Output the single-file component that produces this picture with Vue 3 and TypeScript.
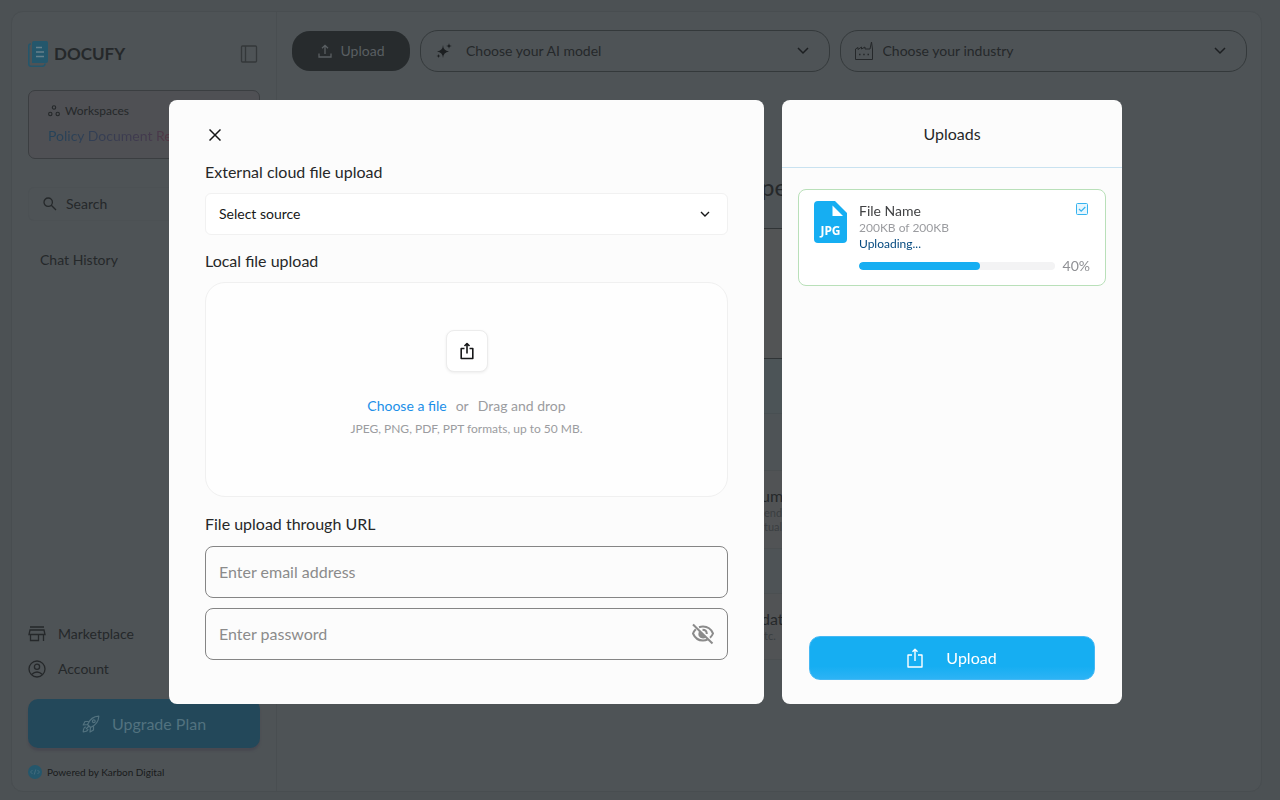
<script setup lang="ts">
import { ref } from 'vue'

interface Suggestion {
  title: string
  lines: string[]
}

const source = ref('')
const model = ref('')
const industry = ref('')
const email = ref('')
const password = ref('')
const showPassword = ref(false)
const progress = ref(62)

const suggestions: Suggestion[] = [
  { title: 'um', lines: ['end', 'tual'] },
  { title: 'dat', lines: ['tc.'] },
]
</script>

<template>
  <div class="screen">
    <div class="frame">
      <aside class="sidebar">
        <div class="brand">
          <svg class="brand-mark" viewBox="0 0 20 26" width="20" height="26" aria-hidden="true">
            <path d="M3 3H2.500Q.8 3 .8 5V23Q.8 25.200 3 25.200H14.500Q17 25.200 17 22.500" fill="none" stroke="#24576c" stroke-width="1.500" />
            <path d="M6 0H18.500Q20 0 20 1.500V20Q20 22 18 22H4V2Q4 0 6 0Z" fill="#24576c" />
            <path d="M8 6.500H14M8 11H16M8 15.500H16" stroke="#66808b" stroke-width="1.600" />
          </svg>
          <span class="brand-name">DOCUFY</span>
          <button class="bare toggle" type="button" aria-label="Toggle sidebar">
            <svg viewBox="0 0 18 18" width="18" height="18" fill="none" stroke="#34383a" stroke-width="1.300">
              <rect x="1.500" y="1" width="15" height="16" rx="1" /><path d="M5.500 1V17" />
            </svg>
          </button>
        </div>

        <section class="workspace">
          <div class="workspace-label">
            <svg viewBox="0 0 12 12" width="12" height="12" fill="none" stroke="#25282a" stroke-width="1.100" aria-hidden="true">
              <circle cx="6" cy="2.500" r="1.700" /><circle cx="2.300" cy="9" r="1.700" /><circle cx="9.700" cy="9" r="1.700" />
            </svg>
            <span>Workspaces</span>
          </div>
          <div class="workspace-name">Policy Document Review</div>
        </section>

        <button class="bare search" type="button">
          <svg viewBox="0 0 14 14" width="14" height="14" fill="none" stroke="#25282a" stroke-width="1.300" aria-hidden="true">
            <circle cx="5.200" cy="5.200" r="4.200" /><path d="M8.300 8.300L13 13" />
          </svg>
          <span>Search</span>
        </button>
        <h2 class="history">Chat History</h2>

        <nav class="links">
          <a href="#marketplace">
            <svg viewBox="0 0 18 18" width="18" height="18" fill="none" stroke="#25282a" stroke-width="1.300" aria-hidden="true">
              <path d="M2 2H16M2 5H16L17 9.500H1ZM2.500 9.500V15.500H10.500V9.500M15.500 9.500V16" />
            </svg>
            <span>Marketplace</span>
          </a>
          <a href="#account">
            <svg viewBox="0 0 18 18" width="18" height="18" fill="none" stroke="#25282a" stroke-width="1.300" aria-hidden="true">
              <circle cx="9" cy="9" r="8" /><circle cx="9" cy="6.800" r="2.600" /><path d="M3.600 14.500Q9 9.500 14.400 14.500" />
            </svg>
            <span>Account</span>
          </a>
        </nav>
        <button class="upgrade" type="button">
          <svg viewBox="0 0 18 18" width="18" height="18" fill="none" stroke="#52727f" stroke-width="1.200" stroke-linejoin="round" aria-hidden="true">
            <path d="M5.500 9.500Q9 1.500 16.800 1.200Q16.500 9 8.500 12.500ZM6.500 6.500L3 6.500L1.200 10L5.500 9.500M11.500 11.500V15L8 17L8.500 12.500" />
            <circle cx="11.800" cy="6.200" r="1.400" />
            <path d="M4 12Q1.500 12 1.200 16.800Q6 16.500 6 14M7 11L4 14" />
          </svg>
          <span>Upgrade Plan</span>
        </button>
        <div class="powered">
          <svg viewBox="0 0 14 14" width="14" height="14" aria-hidden="true">
            <circle cx="7" cy="7" r="7" fill="#24576c" />
            <path d="M4.500 5L2.500 7L4.500 9M9.500 5L11.500 7L9.500 9M7.700 4.500L6.300 9.500" fill="none" stroke="#4a7182" stroke-width=".8" />
          </svg>
          <span>Powered by Karbon Digital</span>
        </div>
      </aside>

      <main class="main">
        <div class="toolbar">
          <button class="pill-button" type="button">
            <svg viewBox="0 0 14 14" width="14" height="14" fill="none" stroke="#5a5f62" stroke-width="1.300" aria-hidden="true">
              <path d="M7 10V1.500M4 4.300L7 1.300L10 4.300M1 9.500V13H13V9.500" />
            </svg>
            <span>Upload</span>
          </button>
          <label class="pill">
            <svg viewBox="0 0 16 16" width="16" height="16" fill="#1c1f21" aria-hidden="true">
              <path d="M7 2Q7.300 7.700 13 8.500Q7.300 9.300 7 15Q6.700 9.300 1 8.500Q6.700 7.700 7 2ZM13 0Q13.200 2.800 16 3Q13.200 3.200 13 6Q12.800 3.200 10 3Q12.800 2.800 13 0ZM2.500 11Q2.600 12.900 4.500 13Q2.600 13.100 2.500 15Q2.400 13.100 .5 13Q2.400 12.900 2.500 11Z" />
            </svg>
            <select v-model="model" aria-label="AI model">
              <option value="">Choose your AI model</option>
            </select>
            <svg viewBox="0 0 12 8" width="12" height="8" fill="none" stroke="#1c1f21" stroke-width="1.500" aria-hidden="true"><path d="M1 1L6 6L11 1" /></svg>
          </label>
          <label class="pill industry">
            <svg viewBox="0 0 20 18" width="20" height="18" fill="none" stroke="#25282a" aria-hidden="true">
              <path d="M1.500 17.500V7L4 5.500V7.500L7.500 5V7L11 5V7H16L17.500 0L18.500 7V17.500Z" stroke-width="1" />
              <path d="M5 12.500H6.500M9.200 12.500H10.700M13.500 12.500H15" stroke-width="1.500" />
            </svg>
            <select v-model="industry" aria-label="Industry">
              <option value="">Choose your industry</option>
            </select>
            <svg viewBox="0 0 12 8" width="12" height="8" fill="none" stroke="#1c1f21" stroke-width="1.500" aria-hidden="true"><path d="M1 1L6 6L11 1" /></svg>
          </label>
        </div>
        <div class="stage">
          <h1>pe</h1>
          <div class="prompt"></div>
          <div class="divider"></div>
          <article v-for="item in suggestions" :key="item.title" class="suggestion">
            <h3>{{ item.title }}</h3>
            <p v-for="line in item.lines" :key="line">{{ line }}</p>
          </article>
        </div>
      </main>
    </div>

    <div class="overlay">
      <section class="dialog" role="dialog" aria-label="File upload">
        <button class="bare close" type="button" aria-label="Close">
          <svg viewBox="0 0 12 12" width="12" height="12" fill="none" stroke="#161718" stroke-width="1.500"><path d="M.5 .5L11.500 11.500M11.500 .5L.5 11.500" /></svg>
        </button>
        <label class="title" for="source">External cloud file upload</label>
        <div class="source">
          <select id="source" v-model="source">
            <option value="">Select source</option>
          </select>
          <svg viewBox="0 0 10 6" width="10" height="6" fill="none" stroke="#161718" stroke-width="1.400" aria-hidden="true"><path d="M1 1L5 5L9 1" /></svg>
        </div>

        <h2 class="title local">Local file upload</h2>
        <div class="dropzone">
          <button class="share" type="button" aria-label="Add a file">
            <svg viewBox="0 0 14 18" width="14" height="18" fill="none" stroke="#161718" stroke-width="1.600" stroke-linejoin="round">
              <path d="M7 11.500V2M4.500 4L7 1.500L9.500 4M4.500 6.500H1.200V16.500H12.800V6.500H9.500" />
            </svg>
          </button>
          <p class="choose"><a href="#choose">Choose a file</a><span>or</span><span>Drag and drop</span></p>
          <p class="formats">JPEG, PNG, PDF, PPT formats, up to 50 MB.</p>
        </div>

        <h2 class="title url">File upload through URL</h2>
        <div class="field">
          <input v-model="email" type="email" placeholder="Enter email address" aria-label="Email address" />
        </div>
        <div class="field">
          <input v-model="password" :type="showPassword ? 'text' : 'password'" placeholder="Enter password" aria-label="Password" />
          <button class="bare eye" type="button" aria-label="Show password" @click="showPassword = !showPassword">
            <svg viewBox="0 0 24 24" width="24" height="24" fill="none" stroke="#8b8b8b" stroke-width="2">
              <path d="M8 5.200Q10 4.500 12 4.500Q19 4.500 22 11.500Q21 14 19 15.800M4.800 7.200Q3 9 2 11.500Q5 18.500 12 18.500Q14.500 18.500 16.500 17.500" />
              <path d="M8 9Q5.500 15.800 12 16.500Q13.800 16.500 15 15.300Z" fill="#8b8b8b" stroke="none" />
              <path d="M11.500 7.800Q15.800 7.800 15.800 12" />
              <path d="M2 2.500L21.500 21.500" />
            </svg>
          </button>
        </div>
      </section>

      <section class="uploads" role="dialog" aria-label="Uploads">
        <header><h2>Uploads</h2></header>
        <article class="file">
          <svg viewBox="0 0 33 42" width="33" height="42" role="img" aria-label="JPG file">
            <path d="M4 0H21L33 12V38Q33 42 29 42H4Q0 42 0 38V4Q0 0 4 0Z" fill="#16aef2" />
            <path d="M18.500 4.500L29 15H18.500Z" fill="#fff" />
            <text x="16.500" y="33.500" text-anchor="middle" class="ext">JPG</text>
          </svg>
          <div class="file-body">
            <div class="file-top">
              <span class="file-name">File Name</span>
              <svg viewBox="0 0 12 12" width="12" height="12" fill="#e6f6fe" stroke="#36b3ef" aria-hidden="true">
                <rect x=".5" y=".5" width="11" height="11" rx="1" /><path d="M3 6L5.200 8.200L9.300 4" fill="none" stroke-width="1.200" />
              </svg>
            </div>
            <div class="size">200KB of 200KB</div>
            <div class="status">Uploading...</div>
            <div class="progress-row">
              <div class="track" role="progressbar" aria-label="Upload progress" :aria-valuenow="progress">
                <div class="bar" :style="{ width: progress + '%' }"></div>
              </div>
              <span class="percent">40%</span>
            </div>
          </div>
        </article>
        <button class="submit" type="button">
          <svg viewBox="0 0 16 20" width="16" height="20" fill="none" stroke="#fff" stroke-width="1.400" stroke-linejoin="round" aria-hidden="true">
            <path d="M8 13V2M5.500 3.800L8 1.300L10.500 3.800M5 7H1V19H15V7H11" />
          </svg>
          <span>Upload</span>
        </button>
      </section>
    </div>
  </div>
</template>

<style>
body { margin: 0; background: #4c5154; }
</style>

<style scoped>
* { box-sizing: border-box; }
h1, h2, h3, p { margin: 0; font-weight: 400; }
svg { flex: none; display: block; }
button, input, select { font: inherit; color: inherit; margin: 0; }
button { cursor: pointer; }
select { appearance: none; border: 0; background: transparent; padding: 0; outline: 0; }

.screen {
  min-height: 100vh;
  display: flex;
  padding: 11px 18px 8px 11px;
  background: #4c5154;
  color: #25282a;
  font-family: Lato, "Liberation Sans", sans-serif;
  font-size: 14px;
  line-height: 20px;
}
.bare { border: 0; padding: 0; background: transparent; display: flex; align-items: center; }

.frame { flex: 1; display: flex; border: 1px solid #484d50; border-radius: 12px; background: #4e5356; }
.sidebar { width: 265px; flex: none; display: flex; flex-direction: column; padding: 28px 16px 9px; border-right: 1px solid #494e51; }
.brand { display: flex; align-items: center; height: 28px; }
.brand-name { margin-left: 6px; font-size: 17px; font-weight: 700; }
.toggle { margin-left: auto; margin-right: 2px; }
.workspace { margin-top: 22px; height: 69px; padding: 10px 19px; border: 1px solid #3b3e41; border-radius: 7px; background: #4f5054; }
.workspace-label { display: flex; align-items: center; gap: 5px; font-size: 12px; }
.workspace-name {
  margin-top: 5px;
  white-space: nowrap;
  background: linear-gradient(90deg, #24435a, #45394c 55%, #6b3537 75%);
  background-clip: text;
  color: transparent;
}
.search { margin-top: 28px; height: 34px; padding-left: 15px; gap: 9px; border-radius: 6px; box-shadow: inset 0 0 0 1px #4c5154; }
.history { margin: 29px 0 0 12px; font-size: 14px; }
.links { margin-top: auto; display: flex; flex-direction: column; gap: 15px; }
.links a { display: flex; align-items: center; gap: 12px; color: inherit; text-decoration: none; }
.upgrade {
  margin-top: 20px; height: 49px; display: flex; align-items: center; justify-content: center; gap: 12px;
  border: 0; border-radius: 10px; background: #23485a; color: #52727f; font-size: 16px; box-shadow: 0 3px 2px #484951;
}
.powered { margin-top: 14px; display: flex; align-items: center; gap: 5px; font-size: 10px; color: #191b1c; }

.main { flex: 1; min-width: 0; display: flex; flex-direction: column; }
.toolbar { display: flex; align-items: center; gap: 10px; padding: 18px 14px 0 15px; }
.pill-button { width: 118px; height: 40px; display: flex; align-items: center; justify-content: center; gap: 9px; border: 0; border-radius: 18px; background: #272b2d; color: #5a5f62; }
.pill { flex: 1; min-width: 0; height: 42px; display: flex; align-items: center; gap: 14px; padding: 0 20px 0 15px; border: 1px solid #34393b; border-radius: 18px; }
.pill.industry { gap: 9px; padding-left: 13px; }
.pill select { flex: 1; min-width: 0; }
.stage { margin-top: 98px; }
.stage h1 { height: 58px; padding-left: 484px; font-size: 24px; line-height: 34px; }
.prompt { height: 131px; margin: 0 150px; border: 1px solid #303436; background: #525455; }
.divider { height: 55px; margin: 0 150px; border-bottom: 1px solid #484f52; background: #4c5457; }
.suggestion { min-height: 67px; margin: 0 150px; padding: 15px 0 14px 334px; background: #515355; border: 1px solid #4b4f51; border-right: 0; border-left: 0; }
.suggestion:nth-of-type(1) { margin-top: 56px; }
.suggestion:nth-of-type(2) { margin-top: 44px; }
.suggestion h3 { font-size: 16px; }
.suggestion p { padding-left: 3px; font-size: 11px; line-height: 14px; color: #3a3e41; }

.overlay { position: fixed; inset: 0; overflow: auto; display: flex; align-items: stretch; justify-content: center; gap: 18px; padding: 100px 24px 96px 35px; color: #272829; }
.dialog, .uploads { min-width: 0; border-radius: 8px; background: #fcfcfc; }
.dialog { flex: 0 1 595px; padding: 25px 36px 44px; }
.uploads { flex: 0 1 340px; display: flex; flex-direction: column; }
.close { width: 20px; height: 20px; justify-content: center; margin-bottom: 17px; }
.title { display: block; font-size: 16px; line-height: 20px; color: #272829; }
.source { height: 42px; margin-top: 11px; display: flex; align-items: center; padding: 0 17px 0 13px; border: 1px solid #f1f1f1; border-radius: 6px; background: #fff; color: #161718; }
.source select { flex: 1; }
.local { margin-top: 16px; }
.dropzone { margin-top: 11px; min-height: 215px; padding: 47px 16px; display: flex; flex-direction: column; align-items: center; border: 1px solid #f0f0f0; border-radius: 20px; background: #fefefe; text-align: center; color: #9b9ca0; }
.share { width: 42px; height: 42px; display: flex; align-items: center; justify-content: center; padding: 0; border: 1px solid #ececec; border-radius: 8px; background: #fff; box-shadow: 0 1px 3px #00000012; }
.choose { margin-top: 24px; display: flex; gap: 9px; }
.choose a { color: #1b8fe8; text-decoration: none; }
.formats { margin-top: 5px; font-size: 12px; line-height: 16px; }
.url { margin-top: 17px; }
.field { height: 52px; margin-top: 10px; display: flex; align-items: center; border: 1px solid #858585; border-radius: 8px; font-size: 16px; }
.url + .field { margin-top: 12px; }
.field input { flex: 1; min-width: 0; height: 100%; padding: 0 13px 2px; border: 0; outline: 0; background: transparent; }
.field input::placeholder { color: #8b8b8b; opacity: 1; }
.eye { margin-right: 12px; }

.uploads header { height: 68px; display: flex; align-items: center; justify-content: center; border-bottom: 1px solid #c9e2f0; }
.uploads h2 { font-size: 16px; }
.file { margin: 21px 16px 0; padding: 11px 15px 9px; display: flex; gap: 12px; border: 1px solid #b9e0b9; border-radius: 8px; background: #fff; }
.ext { font: 700 12px "Noto Sans", sans-serif; fill: #fff; }
.file-body { flex: 1; min-width: 0; }
.file-top { display: flex; align-items: flex-start; justify-content: space-between; height: 19px; padding: 0 2px 0 0; }
.file-top svg { margin-top: 2px; }
.file-name { font-size: 14px; color: #414244; }
.size, .status { font-size: 12px; line-height: 16px; }
.size { color: #9b9ca0; }
.status { color: #04497f; }
.progress-row { margin-top: 4px; height: 20px; display: flex; align-items: center; gap: 8px; }
.track { flex: 1; height: 8px; border-radius: 4px; background: #f3f3f4; overflow: hidden; }
.bar { height: 100%; border-radius: 4px; background: #16aef2; }
.percent { color: #8f9094; }
.submit { margin: auto 27px 24px; height: 44px; display: flex; align-items: center; justify-content: center; gap: 23px; border: 1px solid #45b8f4; border-radius: 11px; background: linear-gradient(#16aef2 70%, #2cb3f5); color: #fff; font-size: 16px; }
</style>
